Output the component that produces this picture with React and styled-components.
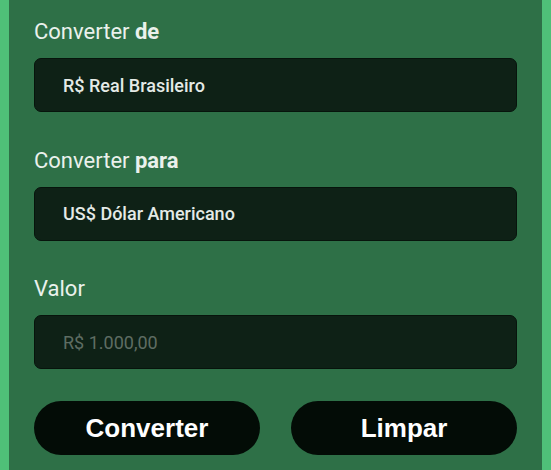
import React from "react";
import styled, { createGlobalStyle } from "styled-components";

const Global = createGlobalStyle`
  html, body { margin: 0; padding: 0; }
  body {
    background: #4fc078;
    font-family: Roboto, "Noto Sans", Arial, sans-serif;
    overflow: hidden;
  }
`;

const Panel = styled.main`
  margin: 0 9px;
  min-height: 100vh;
  background: #2e7047;
  padding: 19px 25px 14px;
  box-sizing: border-box;
  display: flex;
  flex-direction: column;
`;

const Field = styled.div`
  display: flex;
  flex-direction: column;
  margin-bottom: ${(p) => p.$space}px;
`;

const Label = styled.label`
  font-size: 22px;
  line-height: 26px;
  color: #eaf1ec;
  font-weight: 400;
  margin-bottom: 13px;
  b { font-weight: 700; }
`;

const Select = styled.div`
  height: 54px;
  box-sizing: border-box;
  background: #0e2116;
  border: 1px solid #07140c;
  border-radius: 7px;
  display: flex;
  align-items: center;
  padding: 0 28px;
  font-size: 18px;
  font-weight: 500;
  color: #e4eae6;
`;

const Input = styled.input`
  height: 54px;
  box-sizing: border-box;
  background: #0e2116;
  border: 1px solid #07140c;
  border-radius: 7px;
  padding: 0 28px;
  font-family: Roboto, "Noto Sans", Arial, sans-serif;
  font-size: 18px;
  font-weight: 400;
  color: #e4eae6;
  outline: none;
  &::placeholder { color: #5e6d63; }
`;

const Actions = styled.div`
  display: grid;
  grid-template-columns: 1fr 1fr;
  column-gap: 31px;
`;

const Button = styled.button`
  height: 54px;
  border: none;
  border-radius: 27px;
  background: #030c06;
  color: #ffffff;
  font-family: "Liberation Sans", Arial, sans-serif;
  font-weight: 700;
  font-size: 26px;
  cursor: pointer;
`;

export default function App() {
  return (
    <>
      <Global />
      <Panel>
        <Field $space={35.5}>
          <Label>Converter <b>de</b></Label>
          <Select>R$ Real Brasileiro</Select>
        </Field>
        <Field $space={35.5}>
          <Label>Converter <b>para</b></Label>
          <Select>US$ Dólar Americano</Select>
        </Field>
        <Field $space={32}>
          <Label>Valor</Label>
          <Input placeholder="R$ 1.000,00" />
        </Field>
        <Actions>
          <Button>Converter</Button>
          <Button>Limpar</Button>
        </Actions>
      </Panel>
    </>
  );
}
